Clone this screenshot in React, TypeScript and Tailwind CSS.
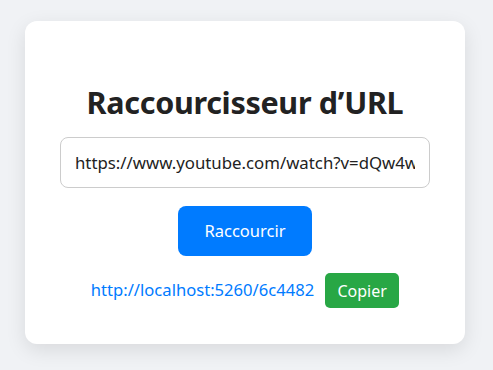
import React from "react";

export default function App() {
  return (
    <div className="min-h-screen w-full bg-[#f0f2f5] pt-[21px]" style={{ fontFamily: '"Noto Sans", "Open Sans", sans-serif' }}>
      <div className="ml-[25px] w-[440px] h-[323px] rounded-[12px] bg-white shadow-[0_6px_20px_rgba(0,0,0,0.1)] px-[35px] pt-[61px] flex flex-col items-center">
        <h1 className="text-[30.5px] leading-[40px] font-bold text-[#222] tracking-[-0.3px]">Raccourcisseur d’URL</h1>
        <input
          className="mt-[15px] w-full h-[51px] rounded-[8px] border border-[#ccc] px-[14px] text-[16.8px] text-[#222] outline-none"
          defaultValue="https://www.youtube.com/watch?v=dQw4w9WgXcQ"
          readOnly
        />
        <button className="mt-[18px] w-[134px] h-[50px] rounded-[8px] bg-[#007bff] text-white text-[16.5px]">Raccourcir</button>
        <div className="mt-[17px] flex items-center gap-[11px]">
          <a className="text-[#007bff] text-[16.6px]" href="#">http://localhost:5260/6c4482</a>
          <button className="w-[74px] h-[35px] rounded-[5px] bg-[#28a745] text-white text-[16px]">Copier</button>
        </div>
      </div>
    </div>
  );
}
